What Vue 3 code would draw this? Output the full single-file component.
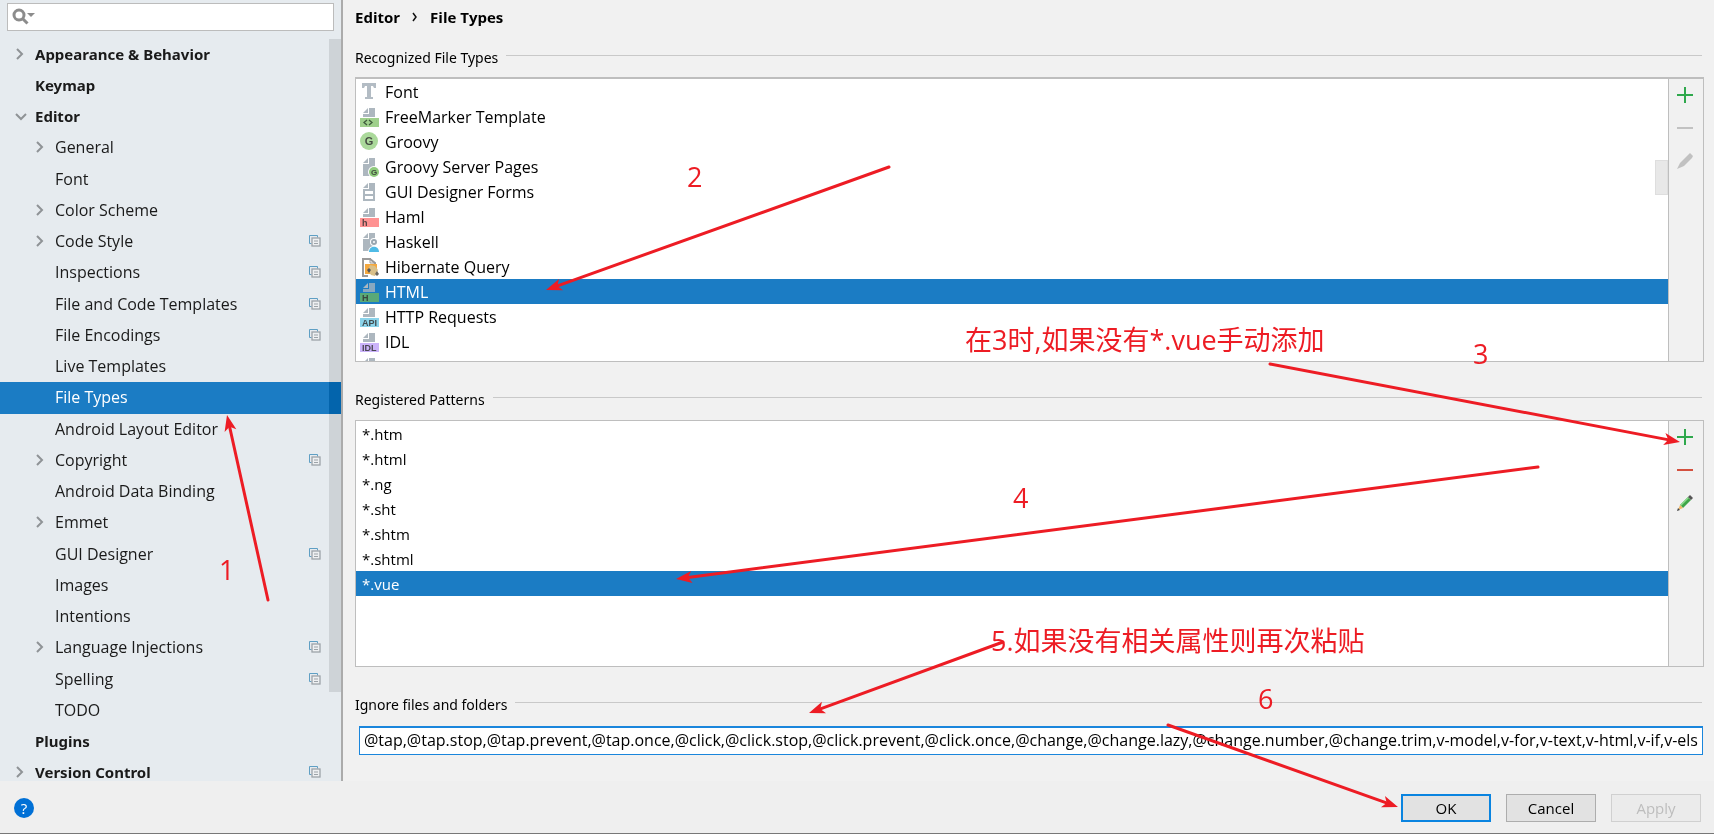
<script setup>
import { ref } from 'vue'

const tree = [
  { label: 'Appearance & Behavior', top: true, arrow: 'right' },
  { label: 'Keymap', top: true },
  { label: 'Editor', top: true, arrow: 'down' },
  { label: 'General', arrow: 'right' },
  { label: 'Font' },
  { label: 'Color Scheme', arrow: 'right' },
  { label: 'Code Style', arrow: 'right', project: true },
  { label: 'Inspections', project: true },
  { label: 'File and Code Templates', project: true },
  { label: 'File Encodings', project: true },
  { label: 'Live Templates' },
  { label: 'File Types', selected: true },
  { label: 'Android Layout Editor' },
  { label: 'Copyright', arrow: 'right', project: true },
  { label: 'Android Data Binding' },
  { label: 'Emmet', arrow: 'right' },
  { label: 'GUI Designer', project: true },
  { label: 'Images' },
  { label: 'Intentions' },
  { label: 'Language Injections', arrow: 'right', project: true },
  { label: 'Spelling', project: true },
  { label: 'TODO' },
  { label: 'Plugins', top: true },
  { label: 'Version Control', top: true, arrow: 'right', project: true },
]

const fileTypes = [
  { label: 'Font', icon: 'font' },
  { label: 'FreeMarker Template', icon: 'band', color: '#9fd08c', code: true },
  { label: 'Groovy', icon: 'groovy' },
  { label: 'Groovy Server Pages', icon: 'gsp' },
  { label: 'GUI Designer Forms', icon: 'form' },
  { label: 'Haml', icon: 'band', color: '#ff9292', tag: 'h' },
  { label: 'Haskell', icon: 'haskell' },
  { label: 'Hibernate Query', icon: 'hibernate' },
  { label: 'HTML', icon: 'band', color: '#59a977', tag: 'H', selected: true },
  { label: 'HTTP Requests', icon: 'band', color: '#8bd3ea', tag: 'API' },
  { label: 'IDL', icon: 'band', color: '#cbb3fa', tag: 'IDL' },
  { label: '', icon: 'band', color: '#9fd08c' },
]

const patterns = ['*.htm', '*.html', '*.ng', '*.sht', '*.shtm', '*.shtml', '*.vue']

const search = ref('')
const ignored = ref(
  '@tap,@tap.stop,@tap.prevent,@tap.once,@click,@click.stop,@click.prevent,@click.once,@change,@change.lazy,@change.number,@change.trim,v-model,v-for,v-text,v-html,v-if,v-else-if,v-else'
)

const arrows = [
  [268, 600, 227, 415],
  [889, 167, 546, 290],
  [1270, 364, 1680, 442],
  [1538, 467, 676, 579],
  [1003, 642, 809, 713],
  [1168, 725, 1398, 807],
]

const notes = [
  { x: 219, y: 580, text: '1' },
  { x: 687, y: 187, text: '2' },
  { x: 1473, y: 364, text: '3' },
  { x: 1013, y: 508, text: '4' },
  { x: 1258, y: 709, text: '6' },
  { x: 965, y: 350, text: '在3时,如果没有*.vue手动添加' },
  { x: 991, y: 651, text: '5.如果没有相关属性则再次粘贴' },
]

// The shaft stops short of the tip so that the head keeps a sharp point.
function shaft([x1, y1, x2, y2]) {
  const length = Math.hypot(x2 - x1, y2 - y1)
  const k = (length - 10) / length
  return { x1, y1, x2: x1 + (x2 - x1) * k, y2: y1 + (y2 - y1) * k }
}

function head([x1, y1, x2, y2]) {
  const angle = (Math.atan2(y2 - y1, x2 - x1) * 180) / Math.PI
  return `translate(${x2} ${y2}) rotate(${angle})`
}
</script>

<template>
  <div class="dialog">
    <div class="body">
      <aside class="sidebar">
        <div class="search">
          <svg width="24" height="18" viewBox="0 0 24 18" aria-hidden="true">
            <circle cx="7" cy="7" r="5" fill="none" stroke="#8c8c8c" stroke-width="3" />
            <path d="M10.500 10.500L15.500 15.500" stroke="#8c8c8c" stroke-width="3" />
            <path d="M15 5H23L19 9Z" fill="#8c8c8c" />
          </svg>
          <input v-model="search" type="text" aria-label="Search settings" />
        </div>
        <div class="tree-wrap">
          <ul class="tree">
            <li v-for="item in tree" :key="item.label">
              <button type="button" class="node" :class="{ top: item.top, selected: item.selected }">
                <svg class="chevron" width="12" height="12" viewBox="0 0 12 12" aria-hidden="true">
                  <path v-if="item.arrow === 'right'" d="M2 1L7 6L2 11" />
                  <path v-if="item.arrow === 'down'" d="M1 4L6 9L11 4" />
                </svg>
                <span class="node-label">{{ item.label }}</span>
                <svg v-if="item.project" width="12" height="12" viewBox="0 0 12 12" aria-hidden="true">
                  <path d="M2.500 8.500H0.500V0.500H8.500V2.500" fill="none" stroke="#5f9fc4" />
                  <rect x="3" y="3" width="8" height="8" fill="#eef0f2" stroke="#9da3a8" stroke-width="1.300" />
                  <path d="M5 6H9M5 8.500H9" stroke="#9da3a8" />
                </svg>
              </button>
            </li>
          </ul>
          <div class="tree-thumb"></div>
        </div>
      </aside>

      <main class="content">
        <nav class="crumbs" aria-label="Breadcrumb">
          <span>Editor</span>
          <svg width="6" height="10" viewBox="0 0 6 10" aria-hidden="true">
            <path d="M1 1L4 5L1 9" fill="none" stroke="#111" stroke-width="1.500" />
          </svg>
          <span>File Types</span>
        </nav>

        <h2 class="section"><span>Recognized File Types</span></h2>
        <div class="panel types">
          <ul class="list" role="listbox" aria-label="Recognized File Types">
            <li v-for="(type, i) in fileTypes" :key="i" role="option" :aria-selected="!!type.selected" :class="{ selected: type.selected }">
              <svg class="type-icon" width="20" height="20" viewBox="0 0 20 20" aria-hidden="true">
                <path v-if="type.icon === 'font'" d="M2 1H16V6H14L13 4H11V15H13V17H5V15H7V4H5L4 6H2Z" fill="#b3bcc4" />
                <template v-if="type.icon === 'band'">
                  <path d="M3 6L8 1V6Z" fill="#adb7bf" />
                  <path d="M9 1H15V10H3V7H9Z" fill="#adb7bf" :fill-opacity="type.selected ? 0.75 : 1" />
                  <rect y="11" width="19" height="9" :fill="type.color" />
                  <path v-if="type.code" d="M7 13L4 15.500L7 18M9 13L12 15.500L9 18" fill="none" stroke="#3f5c3c" stroke-width="1.300" />
                  <text v-if="type.tag" x="2" y="19" class="tag">{{ type.tag }}</text>
                </template>
                <template v-if="type.icon === 'groovy'">
                  <circle cx="9" cy="9" r="9" fill="#abd99b" />
                  <text x="9" y="13" class="tag big">G</text>
                </template>
                <template v-if="type.icon === 'gsp' || type.icon === 'form' || type.icon === 'haskell'">
                  <path d="M3 6L8 1V6Z" fill="#adb7bf" />
                  <path d="M9 1H15V19H3V7H9Z" fill="#adb7bf" />
                </template>
                <template v-if="type.icon === 'gsp'">
                  <circle cx="14" cy="15" r="6" fill="#fff" />
                  <circle cx="14" cy="15" r="5" fill="#8fcb7c" />
                  <text x="14" y="18" class="tag small">G</text>
                </template>
                <path v-if="type.icon === 'form'" d="M5 9H13V12H5ZM5 14H13V17H5Z" fill="#fff" />
                <template v-if="type.icon === 'haskell'">
                  <path d="M9 20C9 13 20 13 20 20Z" fill="#fff" stroke="#fff" stroke-width="2" />
                  <circle cx="14" cy="10" r="4" fill="#fff" />
                  <circle cx="14" cy="10" r="2" fill="none" stroke="#9aa7b0" stroke-width="2" />
                  <path d="M9 20C9 13 19 13 19 20Z" fill="#4fbbe6" />
                </template>
                <template v-if="type.icon === 'hibernate'">
                  <path d="M11 2H3V19H8M10 2L15 6V8" fill="none" stroke="#9a9a9a" stroke-width="2" />
                  <path d="M10 2V6H15" fill="none" stroke="#9a9a9a" />
                  <rect x="5" y="7" width="12" height="10" fill="#f4a83f" />
                  <path d="M10 8L15 9L18 13L15 19L11 18L8 13Z" fill="#d9c08a" />
                  <path d="M9 11L11 13L9 16L7 13Z" fill="#555" />
                  <path d="M17 14L19 17L17 19L15 17Z" fill="#6b675f" />
                </template>
              </svg>
              <span>{{ type.label }}</span>
            </li>
          </ul>
          <div class="list-thumb"></div>
          <div class="tools">
            <button type="button" aria-label="Add file type">
              <svg width="16" height="16" viewBox="0 0 16 16"><path d="M8 0V16M0 8H16" stroke="#2fa84c" stroke-width="2" /></svg>
            </button>
            <button type="button" disabled aria-label="Remove file type">
              <svg width="16" height="16" viewBox="0 0 16 16"><path d="M0 8H16" stroke="#c2c2c2" stroke-width="2" /></svg>
            </button>
            <button type="button" disabled aria-label="Edit file type">
              <svg width="16" height="16" viewBox="0 0 16 16">
                <path d="M0 16L3 10L12 1L13 0L16 3L15 5L7 13Z" fill="#c1c1c1" />
              </svg>
            </button>
          </div>
        </div>

        <h2 class="section second"><span>Registered Patterns</span></h2>
        <div class="panel patterns">
          <ul class="list" role="listbox" aria-label="Registered Patterns">
            <li v-for="p in patterns" :key="p" role="option" :aria-selected="p === '*.vue'" :class="{ selected: p === '*.vue' }">{{ p }}</li>
          </ul>
          <div class="tools">
            <button type="button" aria-label="Add pattern">
              <svg width="16" height="16" viewBox="0 0 16 16"><path d="M8 0V16M0 8H16" stroke="#2fa84c" stroke-width="2" /></svg>
            </button>
            <button type="button" aria-label="Remove pattern">
              <svg width="16" height="16" viewBox="0 0 16 16"><path d="M0 8H16" stroke="#d4503f" stroke-width="2" /></svg>
            </button>
            <button type="button" aria-label="Edit pattern">
              <svg width="16" height="16" viewBox="0 0 16 16">
                <path d="M3 10L11 2L14 5L6 13Z" fill="#3fa648" />
                <path d="M3 10L11 2L12 3L4 11Z" fill="#8ddc8e" />
                <path d="M11 2L13 0L16 3L14 5Z" fill="#555" />
                <path d="M3 10L6 13L1 15Z" fill="#f0b765" />
                <path d="M0 16L1 13L3 15Z" fill="#444" />
              </svg>
            </button>
          </div>
        </div>

        <h2 class="section third"><label for="ignored">Ignore files and folders</label></h2>
        <input id="ignored" v-model="ignored" class="ignored" type="text" spellcheck="false" />
      </main>
    </div>

    <footer class="footer">
      <button type="button" class="help" aria-label="Help"><span>?</span></button>
      <div class="actions">
        <button type="button" class="action primary">OK</button>
        <button type="button" class="action">Cancel</button>
        <button type="button" class="action" disabled>Apply</button>
      </div>
    </footer>

    <svg class="notes">
      <text v-for="note in notes" :key="note.text" :x="note.x" :y="note.y">{{ note.text }}</text>
      <g v-for="(a, i) in arrows" :key="i">
        <line v-bind="shaft(a)" />
        <path :transform="head(a)" d="M0 0L-16 -6L-12 0L-16 6Z" />
      </g>
    </svg>
  </div>
</template>

<style>
body {
  margin: 0;
  overflow: hidden;
}
</style>

<style scoped>
.dialog {
  position: relative;
  display: flex;
  flex-direction: column;
  height: 100vh;
  box-sizing: border-box;
  overflow: hidden;
  border-bottom: 1px solid #777;
  background: #f1f1f1;
  color: #000;
  font: 15px/20px "Open Sans", "Noto Sans CJK SC", sans-serif;
}

button,
input {
  font: inherit;
  color: inherit;
}

ul {
  list-style: none;
  margin: 0;
  padding: 0;
}

.body {
  display: flex;
  flex: 1;
  min-height: 0;
}

.sidebar {
  display: flex;
  flex-direction: column;
  flex: 0 0 341px;
  overflow: hidden;
  border-right: 2px solid #ababab;
  background: #e6ebef;
}

.search {
  display: flex;
  flex-shrink: 0;
  align-items: center;
  height: 26px;
  margin: 3px 7px 8px;
  padding-left: 4px;
  border: 1px solid #bcbcbc;
  background: #fff;
}

.search input {
  flex: 1;
  min-width: 0;
  border: 0;
  padding: 0 4px;
  outline: 0;
  background: transparent;
}

.tree-wrap {
  position: relative;
  flex-shrink: 0;
}

.tree li {
  height: 31px;
}

.tree li:nth-child(4n) {
  height: 32px;
}

.node {
  display: flex;
  align-items: center;
  gap: 8px;
  width: 100%;
  height: 100%;
  padding: 0 20px 2px 35px;
  border: 0;
  background: transparent;
  color: #1a1a1a;
  font-size: 16px;
  text-align: left;
}

.node.top {
  padding-left: 15px;
  font: 700 15px/20px "Noto Sans", sans-serif;
}

.node.selected {
  background: #1b7cc4;
  color: #fff;
}

.node-label {
  flex: 1;
}

.chevron path {
  fill: none;
  stroke: #8f9396;
  stroke-width: 2;
}

.tree-thumb {
  position: absolute;
  top: 0;
  right: 0;
  width: 12px;
  height: 653px;
  background: #181818;
  mix-blend-mode: difference;
}

.content {
  display: flex;
  flex-direction: column;
  flex: 1;
  min-width: 0;
  padding: 7px 10px 26px 12px;
}

.crumbs {
  display: flex;
  align-items: center;
  gap: 12px;
  font-weight: 700;
}

.section {
  display: flex;
  gap: 8px;
  margin: 21px 2px 9px 0;
  font: 14px/20px "Noto Sans", sans-serif;
}

.section::after {
  content: "";
  flex: 1;
  height: 1px;
  margin-top: 7px;
  background: #c9c9c9;
}

.section.second {
  margin: 28px 2px 10px 0;
}

.section.third {
  margin: 28px 2px 11px 0;
}

.panel {
  position: relative;
  display: flex;
  box-sizing: border-box;
  min-height: 0;
  overflow: hidden;
  border: 1px solid #bebebe;
  background: #fff;
}

.types {
  flex: 1 1 285px;
  border-top-width: 2px;
}

.patterns {
  flex: 1 1 247px;
}

.list {
  flex: 1;
}

.list li {
  display: flex;
  align-items: center;
  gap: 5px;
  height: 25px;
  padding-left: 6px;
  box-sizing: border-box;
}

.types .list li {
  padding-left: 4px;
  font-size: 16px;
}

.list .selected {
  background: #1b7cc4;
  color: #fff;
}

.tag {
  fill: #333;
  fill-opacity: 0.85;
  font: 700 9px "Liberation Sans", sans-serif;
}

.tag.big {
  font-size: 11px;
  text-anchor: middle;
}

.tag.small {
  font-size: 8px;
  text-anchor: middle;
}

.list-thumb {
  position: absolute;
  top: 81px;
  right: 35px;
  width: 11px;
  height: 33px;
  border: 1px solid #dedede;
  background: #e8e8e8;
}

.tools {
  flex: 0 0 34px;
  display: flex;
  flex-direction: column;
  border-left: 1px solid #bebebe;
  background: #f1f1f1;
}

.tools button {
  display: flex;
  align-items: center;
  justify-content: center;
  height: 33px;
  padding: 0 2px 2px 0;
  border: 0;
  background: transparent;
}

.ignored {
  box-sizing: border-box;
  height: 29px;
  margin: 0 1px 0 4px;
  padding: 0 4px 2px;
  border: 1px solid #1a86dc;
  border-top-width: 2px;
  outline: 0;
  background: #fff;
  font-size: 16px;
}

.footer {
  display: flex;
  align-items: center;
  justify-content: space-between;
  height: 52px;
  padding: 1px 13px 0 14px;
  box-sizing: border-box;
  background: #efefef;
}

.help {
  display: flex;
  padding: 0;
  border: 0;
  background: transparent;
}

.help span {
  width: 20px;
  border-radius: 50%;
  background: #0070d6;
  color: #fff;
  text-align: center;
}

.actions {
  display: flex;
  gap: 15px;
}

.action {
  width: 90px;
  height: 28px;
  padding: 0;
  border: 1px solid #adadad;
  background: #e2e2e2;
}

.action.primary {
  border: 2px solid #0a84e0;
}

.action:disabled {
  border-color: #d0d0d0;
  background: #ebebeb;
  color: #bdbdbd;
}

.notes {
  position: absolute;
  top: 0;
  left: 0;
  width: 100%;
  height: 100%;
  pointer-events: none;
}

.notes text {
  fill: #ed1c24;
  font: 27px "Open Sans", "Noto Sans CJK SC", sans-serif;
}

.notes line {
  stroke: #ed1c24;
  stroke-width: 3;
  stroke-linecap: round;
}

.notes path {
  fill: #ed1c24;
}
</style>
